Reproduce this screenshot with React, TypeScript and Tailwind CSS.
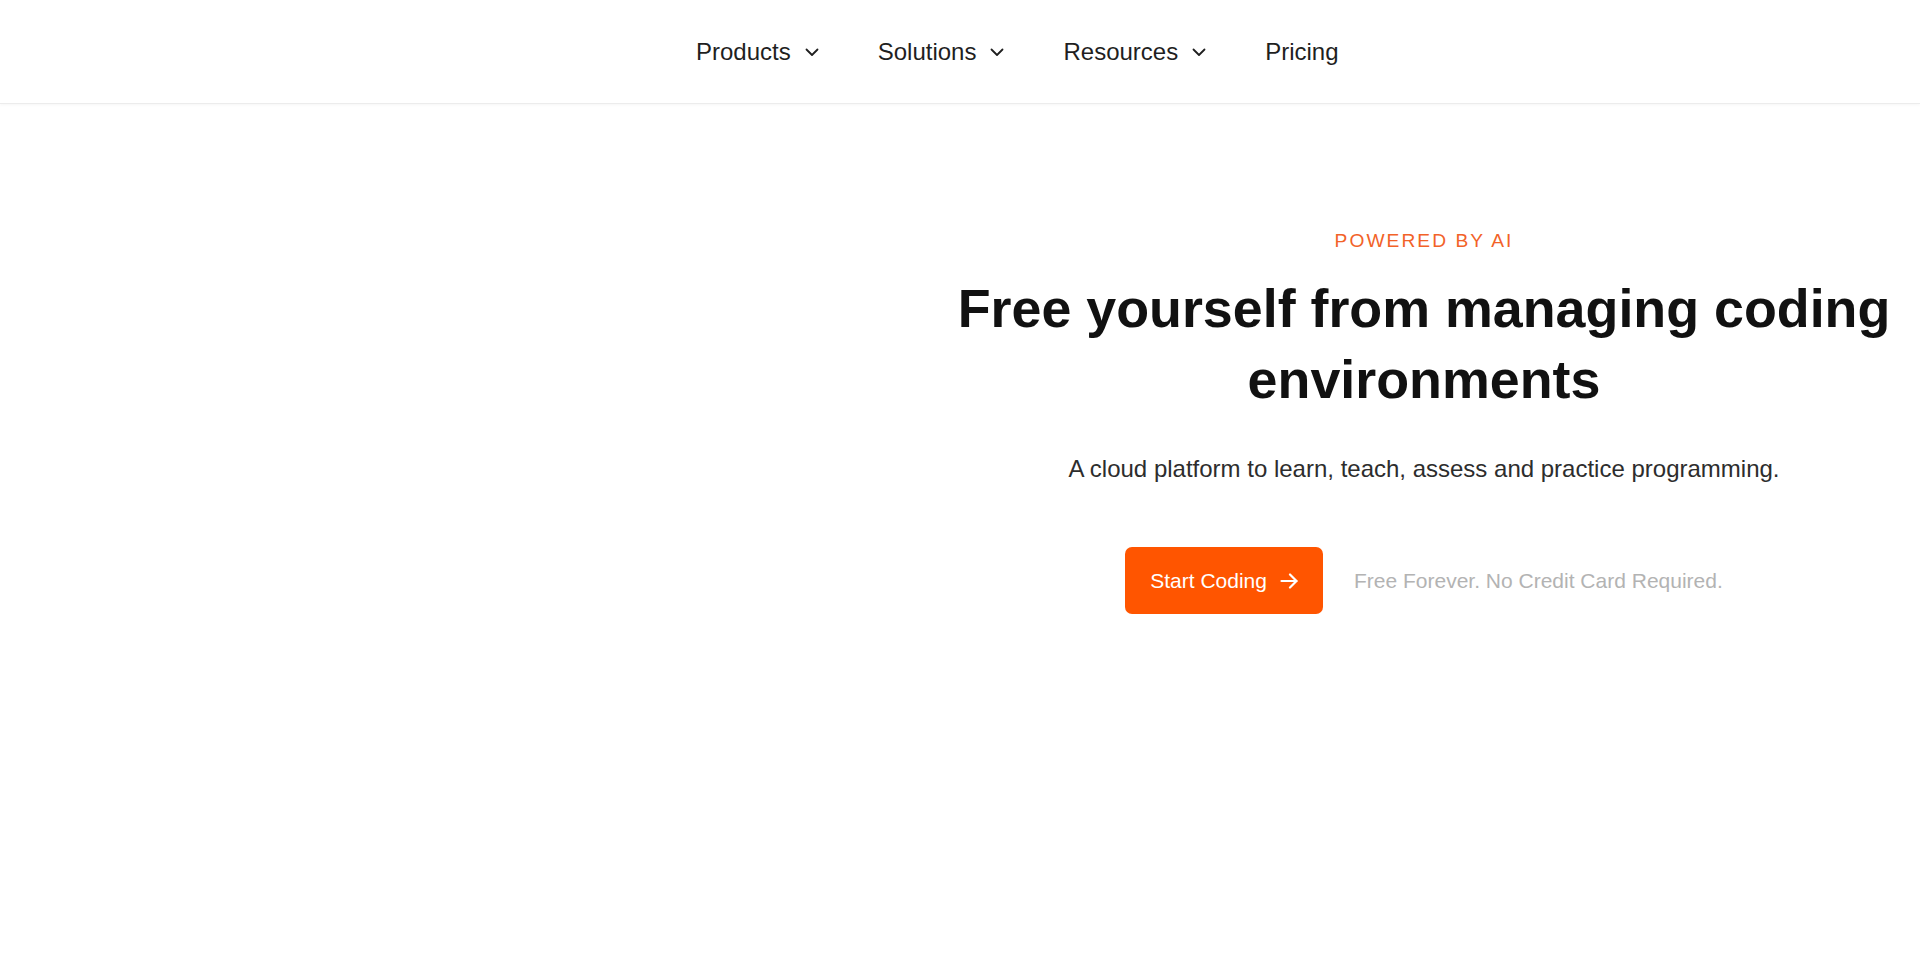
import React from "react";

const font = { fontFamily: '"Liberation Sans", Arial, Helvetica, sans-serif' };

function Chevron() {
  return (
    <svg width="24" height="24" viewBox="0 0 24 24" fill="none" stroke="currentColor" strokeWidth="1.8" strokeLinecap="round" strokeLinejoin="round" className="ml-[9px]">
      <path d="m6.5 9.5 5.5 5.5 5.5-5.5" />
    </svg>
  );
}

function NavItem({ label, dropdown }: { label: string; dropdown?: boolean }) {
  return (
    <a className="flex items-center text-[24px] leading-[30px] text-[#1f1f1f] cursor-pointer">
      <span>{label}</span>
      {dropdown && <Chevron />}
    </a>
  );
}

export default function App() {
  return (
    <div className="min-h-[963px] w-full bg-white" style={font}>
      <header className="h-[104px] border-b border-[#ececec] shadow-[0_1px_3px_rgba(0,0,0,0.04)] flex items-center pl-[696px]">
        <nav className="flex items-center gap-[54px] pt-[1px]">
          <NavItem label="Products" dropdown />
          <NavItem label="Solutions" dropdown />
          <NavItem label="Resources" dropdown />
          <NavItem label="Pricing" />
        </nav>
      </header>
      <main className="flex">
        <div className="w-[928px] shrink-0" />
        <section className="flex-1 flex flex-col items-center text-center pt-[122px]">
          <p className="text-[19.2px] leading-[29px] tracking-[2.05px] text-[#f26228] uppercase">Powered by AI</p>
          <h1 className="mt-[18px] text-[53.8px] leading-[71px] font-bold text-[#111111]">
            Free yourself from managing coding environments
          </h1>
          <p className="mt-[36px] text-[24px] leading-[36px] text-[#2d2d2d]">
            A cloud platform to learn, teach, assess and practice programming.
          </p>
          <div className="mt-[60px] flex items-center gap-[31px]">
            <button className="h-[67px] flex items-center gap-[13px] px-[25px] rounded-[7px] bg-[#ff5500] text-white text-[21px]">
              <span>Start Coding</span>
              <svg width="18" height="16" viewBox="0 0 18 16" fill="none" stroke="currentColor" strokeWidth="2.2" strokeLinecap="round" strokeLinejoin="round">
                <path d="M1.5 8h15" />
                <path d="M10 1.5 16.5 8 10 14.5" />
              </svg>
            </button>
            <span className="text-[21px] text-[#b3b3b3]">Free Forever. No Credit Card Required.</span>
          </div>
        </section>
      </main>
    </div>
  );
}
